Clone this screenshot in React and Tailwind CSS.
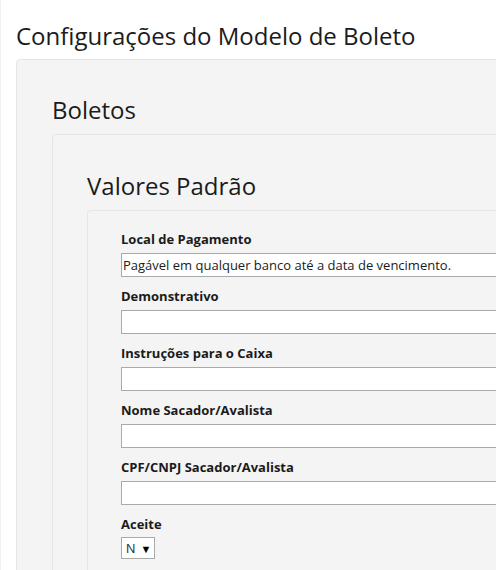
export default function App() {
  const fields = [
    { label: "Local de Pagamento", value: "Pagável em qualquer banco até a data de vencimento." },
    { label: "Demonstrativo", value: "" },
    { label: "Instruções para o Caixa", value: "" },
    { label: "Nome Sacador/Avalista", value: "" },
    { label: "CPF/CNPJ Sacador/Avalista", value: "" },
  ]

  return (
    <div className="w-[496px] h-[570px] overflow-hidden bg-white border-l border-[#f2f2f6] font-['Open_Sans',sans-serif] text-[#1b1b1b]">
      <div className="pl-[15px] pt-[19px]">
        <h1 className="text-[24px] leading-[33px] font-normal">Configurações do Modelo de Boleto</h1>

        {/* Boletos */}
        <div className="mt-[7px] w-[700px] bg-[#f4f4f4] border border-[#e6e6e6] rounded-[4px] pl-[35px] pt-[33px]">
          <h2 className="text-[24px] leading-[33px] font-normal">Boletos</h2>

          {/* Valores Padrão */}
          <div className="mt-[8px] bg-[#f4f4f4] border border-[#e6e6e6] rounded-[4px] pl-[34px] pt-[34px]">
            <h3 className="text-[24px] leading-[33px] font-normal">Valores Padrão</h3>

            <div className="mt-[8px] bg-[#f4f4f4] border border-[#e6e6e6] rounded-[4px] pl-[33px] pt-[20px] pb-[20px]">
              {fields.map((f) => (
                <div key={f.label} className="mb-[11px]">
                  <label className="block text-[13px] leading-[17px] font-bold text-[#1b1b1b]">{f.label}</label>
                  <input
                    defaultValue={f.value}
                    className="mt-[5px] block w-[500px] h-[24px] bg-white border border-[#a9a9a9] px-[1px] text-[13px] text-[#1b1b1b] outline-none"
                  />
                </div>
              ))}
              <div>
                <label className="block text-[13px] leading-[17px] font-bold text-[#1b1b1b]">Aceite</label>
                <div className="mt-[4px] w-[34px] h-[22px] bg-white border border-[#a9a9a9] flex items-center pl-[4px] gap-[5px]">
                  <span className="text-[13px] leading-none font-['Liberation_Sans',sans-serif] text-[#333]">N</span>
                  <span className="text-[11px] leading-none text-black">▼</span>
                </div>
              </div>
            </div>
          </div>
        </div>
      </div>
    </div>
  )
}
